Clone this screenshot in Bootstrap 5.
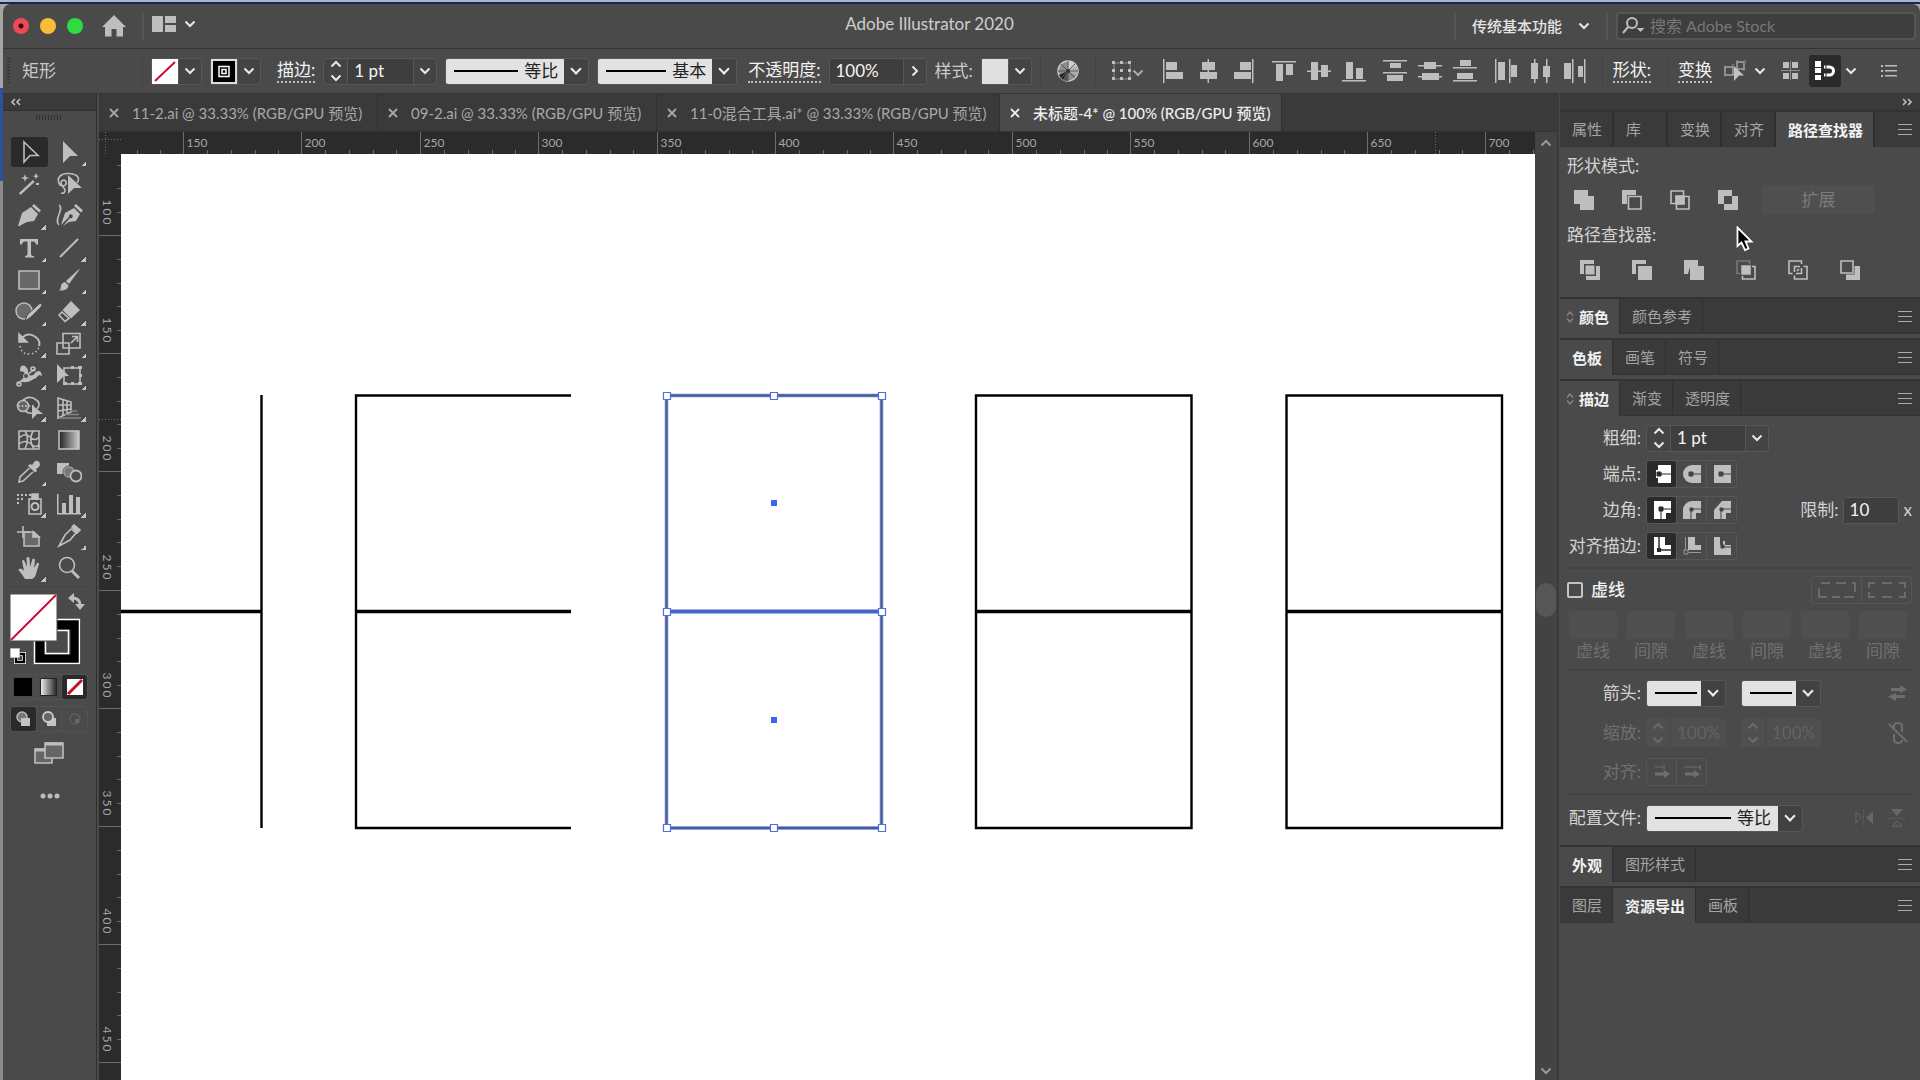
<!DOCTYPE html>
<html lang="zh-CN" data-bs-theme="dark">
<head>
<meta charset="utf-8">
<meta name="viewport" content="width=device-width, initial-scale=1">
<title>Adobe Illustrator 2020</title>
<link href="https://cdn.jsdelivr.net/npm/bootstrap@5.3.0/dist/css/bootstrap.min.css" rel="stylesheet">
<style>
:root{--face:#4a4a4a;--deep:#3a3a3a;--edge:#303030;--rim:#575757;--well:#3e3e3e;--ink:#d2d2d2;--icon:#bebebe;--dim:#707070}
*{box-sizing:border-box}
body{font-family:Lato,"Noto Sans CJK SC",sans-serif;font-size:17px;line-height:24px;color:var(--ink);background:#8b8b8b;height:100vh;overflow:hidden}
button,input,select{font:inherit;color:inherit;background:none;border:0;padding:0;margin:0;border-radius:0}
button{display:flex;align-items:center;justify-content:center}
svg{display:block;flex:none}
a{color:inherit;text-decoration:none}
.desk{height:100vh;padding:4px 0 0 3px;background:linear-gradient(#a9b4d6 0 2px,#1d2540 2px 4px,transparent 4px),linear-gradient(#a5a5a5 0 88px,#2e4f9c 88px 181px,#8b8b8b 181px)}
.app-win{background:var(--face);border-radius:8px 8px 0 0;height:100%;overflow:hidden}
.ic{fill:var(--icon);stroke:none}
.ln{fill:none;stroke:var(--icon);stroke-width:1.6}
.chev{width:12px;height:12px;fill:none;stroke:#e8e8e8;stroke-width:2}
.vsep{width:2px;height:28px;background:#555}
.vsep.low{background:#424242;width:1px;height:30px}
/* title bar */
.titlebar{height:45px;border-bottom:1px solid #343434;position:relative}
.bar-l{flex:1 1 0}
.bar-r{flex:1 1 64px}
.lamp{width:16px;height:16px;border-radius:50%;margin-right:11px}
.lamp-r{background:radial-gradient(#3a0a0e 0 2px,#ee4a54 3px);margin-left:10px}
.lamp-y{background:#f8bd33}.lamp-g{background:#2fdc40}
.win-name{font-size:17px;line-height:24px;padding-bottom:4px;color:#cfcfcf}
.ws{font-size:15px;color:#e4e4e4;font-weight:500}
.search{width:300px;height:28px;border:2px solid #555;border-radius:4px;background:var(--well)}
.search input{flex:1;min-width:0;outline:0;font-size:16px}
.search input::placeholder{color:#777;opacity:1}
/* control bar */
.ctrlbar{height:45px;border-bottom:1px solid #343434;color:#f0f0f0}
.grip{width:3px;height:26px;margin-left:4px;background:repeating-linear-gradient(#2f2f2f 0 1px,transparent 1px 3px)}
.und{border-bottom:2px dotted #bbb;line-height:22px;color:#f2f2f2;white-space:nowrap}
.boxed{height:27px;display:flex;border:1px solid var(--rim);border-radius:3px;background:#444}
.boxed>*+*{border-left:1px solid var(--rim)}
.boxed input{background:var(--well);padding-left:6px;color:#f5f5f5;font-size:17px;min-width:0;outline:0}
.boxed button{width:23px}
.sw{width:26px;flex:none}
.sw svg{width:26px;height:25px}
.dd{position:relative;height:27px}
.dd::after{content:"";position:absolute;right:9px;top:7px;width:8px;height:8px;border:solid #f0f0f0;border-width:0 2px 2px 0;transform:rotate(45deg);pointer-events:none}
.dd select{appearance:none;width:100%;height:27px;border:1px solid var(--rim);border-radius:3px;color:#222;outline:0;line-height:24px;
background:linear-gradient(#000,#000) 8px 50%/var(--len) 2px no-repeat,linear-gradient(90deg,#e2e2e2 calc(100% - 24px),#424242 0);padding-left:calc(var(--len) + 14px)}
.dd option{color:#eee}
.dd-a{width:144px;--len:64px}.dd-b{width:140px;--len:60px}.dd-c{width:80px;--len:42px}.dd-d{width:157px;--len:76px}
.cell{width:35px;height:32px}
.on{background:#2a2a2a;border-radius:3px}
/* tools */
.tools{width:94px;border-right:1px solid var(--edge)}
.mini-head{height:17px;background:var(--deep);border-bottom:1px solid var(--edge)}
.tgrip{width:26px;height:5px;margin:4px 0 16px 33px;background:repeating-linear-gradient(90deg,#2f2f2f 0 1px,transparent 1px 3px)}
.tgrid{display:grid;grid-template-columns:40px 40px;grid-auto-rows:32px;padding-left:6px}
.tgrid button{position:relative}
.tgrid button.on{width:37px;height:30px;margin:1px 1px 1px 2px}
.more::after{content:"";position:absolute;right:3px;bottom:2px;width:5px;height:5px;background:linear-gradient(135deg,transparent 50%,#c4c4c4 50%)}
.trio{width:78px;height:26px;margin-left:7px;border:1px solid #525252;border-radius:3px}
.trio button{flex:1;height:24px}
.trio button+button{border-left:1px solid #525252}
/* document */
.doc{min-width:0;margin-left:2px;background:var(--deep)}
.doctabs{height:38px;border-bottom:1px solid #333;font-size:15px;color:#a8a8a8}
.dtab{padding-left:10px;border-right:1px solid #303030;white-space:nowrap}
.dtab.cur{background:var(--face);color:#eee;font-weight:500}
.dtab svg{margin-right:13px}
.dt1{width:279px}.dt2{width:279px}.dt3{width:343px}.dt4{width:282px}
.rul{background:#2b2b2b}
.rul path{stroke:#6d6d6d;fill:none}
.rul text{font-size:12px;fill:#a6a6a6}
.hr-h{height:22px}.hr-v{width:22px}
.art{background:#fff}
.sbar{width:22px;background:#434343}
.thumb{width:20px;height:34px;border-radius:10px;background:#575757;margin:auto}
.side{width:363px;border-left:2px solid var(--deep);padding-left:1px}
.ptabs{height:36px;background:var(--deep);border-top:1px solid #333;border-bottom:1px solid #333;font-size:15px;color:#a4a4a4}
.ptab{padding:0 10px 0 12px;border-right:1px solid #2f2f2f}
.ptab.cur{background:var(--face);color:#f2f2f2;font-weight:700;margin-bottom:-1px}
.ptab.wide{padding-right:25px}
.ptabs.first .ptab{border-right-width:2px}
.ptab.tw{padding-left:5px}
.burger{width:14px;height:14px;margin:auto 8px auto auto;background:repeating-linear-gradient(#aaa 0 1px,transparent 1px 5px) 0 2px no-repeat}
.pgap{height:6px;border-bottom:1px solid #333}
.pgap.slim{height:5px}
.pbody{padding:0 8px 0 7px}
.prow{height:36px;display:flex;align-items:center}
.plab{width:74px;text-align:right;white-space:nowrap;margin-right:5px;flex:none}
.seg{display:flex;border:1px solid #565656;border-radius:3px;height:28px}
.seg button{width:29px;height:26px}
.seg button+button{border-left:1px solid #565656;width:30px}
.rule{height:2px;background:#444}
.dimt{color:var(--dim)}
.pf{display:flex;gap:28px}
.expand{width:113px;height:29px;background:#4f4f4f;border-radius:3px;color:#7b7b7b;margin-left:24px}
.tick{appearance:none;width:16px;height:16px;border:2px solid #c4c4c4;border-radius:2px}
.gaps{display:grid;grid-template-columns:repeat(6,48px);column-gap:10px;padding:1px 0 0 2px}
.gaps label{display:flex;flex-direction:column;text-align:center;color:var(--dim);line-height:24px}
.gaps input{width:48px;height:28px;background:#4f4f4f}
.ghost{height:28px;display:flex;background:#4f4f4f;width:80px;color:#626262}
.ghost input{width:56px;padding-left:6px;border-left:1px solid #484848}
.ghost button{width:24px}
.ghost .chev{stroke:#6b6b6b}
.pointer{position:absolute;left:1736px;top:226px;z-index:5}
</style>
<script src="https://cdn.jsdelivr.net/npm/bootstrap@5.3.0/dist/js/bootstrap.bundle.min.js"></script>
</head>
<body>
<svg width="0" height="0" class="position-absolute">
<defs>
<symbol id="dn" viewBox="0 0 12 12"><path d="M1.5 3.5 6 8 10.5 3.5"/></symbol>
<symbol id="ud" viewBox="0 0 12 22"><path d="M1.5 6.5 6 2 10.5 6.5M1.5 15.500 6 20 10.500 15.500"/></symbol>
<symbol id="x" viewBox="0 0 10 10"><path d="M1 1 9 9M9 1 1 9" fill="none" stroke="currentColor" stroke-width="1.800"/></symbol>
<linearGradient id="g1"><stop offset="0" stop-color="#222"/><stop offset="1" stop-color="#ccc"/></linearGradient>
<linearGradient id="g2"><stop offset="0" stop-color="#eee"/><stop offset="1" stop-color="#2a2224"/></linearGradient>
</defs></svg>

<div class="desk"><div class="app-win d-flex flex-column">
<header class="titlebar d-flex align-items-center">
  <div class="bar-l d-flex align-items-center">
    <span class="lamp lamp-r"></span><span class="lamp lamp-y"></span><span class="lamp lamp-g"></span>
    <button class="ms-2" aria-label="主页"><svg class="ic" width="24" height="22" viewBox="0 0 24 22"><path d="M12 0 24 12H21V21.500H14.500V14H9.500V21.500H3V12H0Z"/></svg></button>
    <span class="vsep ms-3"></span>
    <button class="ms-2" aria-label="排列文档"><svg class="ic mb-1" width="24" height="16"><path d="M0 0H11V16H0ZM13 0H24V7H13ZM13 9H24V16H13Z"/></svg><svg class="chev ms-2 mb-1"><use href="#dn"/></svg></button>
  </div>
  <div class="win-name">Adobe Illustrator 2020</div>
  <div class="bar-r d-flex align-items-center justify-content-end">
    <span class="vsep me-3"></span>
    <button class="ws">传统基本功能<svg class="chev ms-3"><use href="#dn"/></svg></button>
    <span class="vsep ms-3 me-2"></span>
    <div class="search d-flex align-items-center ps-1 me-1"><svg class="ln me-1" width="24" height="18" viewBox="0 0 24 18" style="stroke-width:2"><circle cx="10" cy="6" r="5"/><path d="M6.500 9.500 1 16"/><path d="M14.500 11h8l-4 4z" fill="#bebebe" stroke="none"/></svg><input type="search" placeholder="搜索 Adobe Stock" aria-label="搜索 Adobe Stock"></div>
  </div>
</header>

<div class="ctrlbar d-flex align-items-center">
  <span class="grip"></span><span style="color:#c8c8c8" class="ms-2 ps-1">矩形</span>
  <span class="vsep low" style="margin-left:86px"></span>
  <div class="boxed ms-2"><span class="sw"><svg><path fill="#fff" d="M0 0H26V25H0Z"/><path d="M3 22 23 3" stroke="#c8102e" stroke-width="2"/></svg></span><button aria-label="填色"><svg class="chev"><use href="#dn"/></svg></button></div>
  <div class="boxed ms-2"><span class="sw"><svg><path fill="#000" stroke="#ddd" stroke-width="2" d="M1 1H25V24H1Z"/><path d="M8 7.500h10v10h-10zM11 10.500h4v4h-4z" fill="none" stroke="#fff" stroke-width="1.500"/></svg></span><button aria-label="描边颜色"><svg class="chev"><use href="#dn"/></svg></button></div>
  <label for="sw1" class="und ms-3">描边:</label>
  <div class="boxed ms-2"><button aria-label="增减"><svg class="chev" style="height:22px"><use href="#ud"/></svg></button><input id="sw1" value="1 pt" style="width:66px"><button aria-label="粗细列表"><svg class="chev"><use href="#dn"/></svg></button></div>
  <div class="dd dd-a ms-2"><select aria-label="变量宽度配置文件"><option>等比</option></select></div>
  <div class="dd dd-b ms-2"><select aria-label="画笔定义"><option>基本</option></select></div>
  <label for="op" class="und" style="margin-left:11px">不透明度:</label>
  <div class="boxed ms-2"><input id="op" value="100%" style="width:73px"><button aria-label="不透明度滑块"><svg class="chev" style="transform:rotate(-90deg)"><use href="#dn"/></svg></button></div>
  <span class="ms-2" style="color:#ccc">样式:</span>
  <div class="boxed ms-2"><span class="sw"><svg><path fill="#e0e0e0" d="M0 0H26V25H0Z"/></svg></span><button aria-label="图形样式"><svg class="chev"><use href="#dn"/></svg></button></div>
  <span class="vsep low ms-2"></span>
  <button class="ms-3" aria-label="重新着色图稿"><svg width="22" height="22" viewBox="0 0 22 22"><circle cx="11" cy="11" r="10" fill="#8d8d8d" stroke="#c8c8c8" stroke-width="1.500"/><path d="M11 11V1a10 10 0 0 1 9 5Z" fill="#ccc"/><path d="M11 11 20 6a10 10 0 0 1 0 10Z" fill="#b0b0b0"/><path d="M11 11 6 20a10 10 0 0 1-4-5Z" fill="#222"/><path d="M11 11V21a10 10 0 0 1-5-1Z" fill="#555"/><path d="M11 1V21M1 11H21M4 4 18 18M18 4 4 18" stroke="#5a5a5a" stroke-width="1"/><circle cx="11" cy="11" r="2" fill="#333"/></svg></button>
  <span class="vsep low ms-3"></span>
  <button class="ms-3" aria-label="对齐到画板"><svg width="20" height="20" class="ic"><path d="M2 2H18V18H2Z" fill="none" stroke="#8a8a8a"/><path d="M0 0h3v3H0zM8 0h3v3H8zM16 0h3v3H16zM0 8h3v3H0zM8 8h3v3H8zM16 8h3v3H16zM0 16h3v3H0zM8 16h3v3H8zM16 16h3v3H16z"/></svg><svg class="chev" style="stroke:#aaa;margin-top:4px"><use href="#dn"/></svg></button>
  <div class="d-flex ms-2 ps-1">
   <button class="cell" aria-label="水平左对齐"><svg class="ic" width="24" height="24"><path d="M2 0h1.500v24H2zM5 3h11v8H5zM5 13h17v7H5z"/></svg></button>
   <button class="cell" aria-label="水平居中对齐"><svg class="ic" width="24" height="24"><path d="M11.500 0h1.500v24h-1.500zM6 3h13v8H6zM4 13h17v7H4z"/></svg></button>
   <button class="cell" aria-label="水平右对齐"><svg class="ic" width="24" height="24"><path d="M21 0h1.500v24H21zM9 3h11v8H9zM3 13h17v7H3z"/></svg></button>
   <span style="width:6px"></span>
   <button class="cell" aria-label="垂直顶对齐"><svg class="ic" width="24" height="24"><path d="M0 2h24v1.500H0zM4 5h7v17H4zM14 5h7v11h-7z"/></svg></button>
   <button class="cell" aria-label="垂直居中对齐"><svg class="ic" width="24" height="24"><path d="M0 11.500h24v1.500H0zM4 3h7v18H4zM14 6h7v12h-7z"/></svg></button>
   <button class="cell" aria-label="垂直底对齐"><svg class="ic" width="24" height="24"><path d="M0 21h24v1.500H0zM4 3h7v17H4zM14 9h7v11h-7z"/></svg></button>
   <span style="width:6px"></span>
   <button class="cell" aria-label="垂直顶分布"><svg class="ic" width="24" height="24"><path d="M0 1h24v1.500H0zM7 4h11v5H7zM0 13h24v1.500H0zM4 16h16v6H4z"/></svg></button>
   <button class="cell" aria-label="垂直居中分布"><svg class="ic" width="24" height="24"><path d="M0 6h24v1.500H0zM6 3h12v7H6zM0 17h24v1.500H0zM4 14h17v7H4z"/></svg></button>
   <button class="cell" aria-label="垂直底分布"><svg class="ic" width="24" height="24"><path d="M0 8h24v1.500H0zM7 1h11v6H7zM0 21h24v1.500H0zM4 14h16v6H4z"/></svg></button>
   <span style="width:6px"></span>
   <button class="cell" aria-label="水平左分布"><svg class="ic" width="24" height="24"><path d="M1 0h1.500v24H1zM4 3h7v18H4zM15 0h1.500v24H15zM17 6h6v12h-6z"/></svg></button>
   <button class="cell" aria-label="水平居中分布"><svg class="ic" width="24" height="24"><path d="M5 0h1.500v24H5zM2 4h7v16H2zM17 0h1.500v24H17zM14 7h7v11h-7z"/></svg></button>
   <button class="cell" aria-label="水平右分布"><svg class="ic" width="24" height="24"><path d="M0 4h7v16H0zM8 0h1.500v24H8zM14 7h5v11h-5zM20 0h1.500v24H20z"/></svg></button>
  </div>
  <span class="vsep low ms-2"></span>
  <a href="#" class="und" style="margin-left:10px">形状:</a>
  <span class="vsep low ms-3"></span>
  <a href="#" class="und" style="margin-left:10px">变换</a>
  <button style="margin-left:12px" aria-label="隔离选中的对象"><svg width="22" height="22"><path d="M1 7h8v8H1zM13 2h7v7h-7z" fill="none" stroke="#a5a5a5" stroke-width="1.500"/><path d="M10 6 20 15.500H15L10 21Z" fill="#c2c2c2"/><path d="M0 5v3M0 14v3M9 6V4M12 1h2M19 0h2v3M20 8v3" stroke="#999"/></svg><svg class="chev ms-2"><use href="#dn"/></svg></button>
  <button style="margin-left:15px" aria-label="对齐像素"><svg width="20" height="20" class="ic"><path d="M2 1h6v6H2zM11 1h6v6h-6zM2 12h6v6H2zM11 12h6v6h-6z"/><path d="M9.500 0V19M0 9.500H19" stroke="#8a8a8a"/></svg></button>
  <button class="on ms-2" style="width:32px;height:32px" aria-label="对齐字形"><svg width="22" height="20"><path d="M1 0h6v6H1zM1 7h6v5H1zM1 14h6v5H1z" fill="#fff"/><path d="M10 6h5.500a4 4 0 0 1 0 8H10" fill="none" stroke="#fff" stroke-width="3"/><path d="M12 4v4M12 12v4" stroke="#2a2a2a"/></svg></button>
  <button class="ms-1" aria-label="更多"><svg class="chev"><use href="#dn"/></svg></button>
  <button style="margin-left:24px" aria-label="控制面板菜单"><svg width="16" height="12" class="ic"><path d="M0 0h2v2H0zM4 0h12v1.500H4zM0 5h2v2H0zM4 5h12v1.500H4zM0 10h2v2H0zM4 10h12v1.500H4z"/></svg></button>
</div>

<div class="d-flex flex-fill" style="min-height:0">
<aside class="tools flex-shrink-0">
  <div class="mini-head d-flex align-items-center ps-2"><svg width="10" height="8" class="ln"><path d="M4 1 1 4 4 7M9 1 6 4 9 7"/></svg></div>
  <div class="tgrip"></div>
  <div class="tgrid">
   <button class="on" aria-label="选择工具"><svg width="24" height="24" class="ln"><path d="M6 2 20 15.500H12L6 22Z"/></svg></button>
   <button class="more" aria-label="直接选择工具"><svg width="24" height="24" class="ic"><path d="M6 1 21 16H13L6 23Z"/></svg></button>
   <button aria-label="魔棒工具"><svg width="24" height="24" class="ic"><path d="M2 21 16 8 17.500 10 3.500 23Z"/><path d="M8 2 9 5 12 6 9 7 8 10 7 7 4 6 7 5ZM19 1 20 3.500 22 4 20 5 19 7 18 5 16 4 18 3.500ZM19 11h3v2h-3z"/></svg></button>
   <button aria-label="套索工具"><svg width="26" height="24" class="ln"><path d="M4 13C-1 5 6 1 13 1.500S25 5 21 11M4 13c4 2 7 0 6-3s-5-2-5 1 4 5 4 7-1 4-4 3"/><path class="ic" style="stroke:none" d="M12 3 26 16H18L12 22Z"/></svg></button>
   <button class="more" aria-label="钢笔工具"><svg width="24" height="24" class="ic"><path d="M14 3 21 10 17 17 10 18 2 22 1.500 21 10 13A2 2 0 1 1 11.500 14.500L3 22 1 22 5 9Z"/><path d="M15 2 17 0 24 6.500 22 8.500Z"/></svg></button>
   <button aria-label="曲率工具"><svg width="27" height="24" class="ic"><path d="M3 1C9 4-3 16 3 21" class="ln"/><path d="M18 4 24 10 20 17 13 18 7 22 14 14A2 2 0 1 0 13 13L5 21 9 9Z"/><path d="M18 2 20 0 27 6.500 25 8.500Z"/></svg></button>
   <button class="more" aria-label="文字工具"><svg width="24" height="24" class="ic"><path d="M3 3H21V8.500H19Q18.500 5.500 16 5.500H14V18Q14 20 17 20V21.500H8V20Q10.500 20 10.500 18V5.500H8Q5.500 5.500 5 8.500H3Z"/></svg></button>
   <button class="more" aria-label="直线段工具"><svg width="24" height="24" class="ln"><path d="M3 21 21 3" stroke-width="2"/></svg></button>
   <button class="more" aria-label="矩形工具"><svg width="24" height="24" class="ln"><path d="M2 3H22V21H2Z" fill="#686868"/></svg></button>
   <button class="more" aria-label="画笔工具"><svg width="24" height="24" class="ic"><path d="M23 1 12 16 9 13 21 2ZM8 14 11.500 17.500Q11 23 2 22.500 4 21 4 18T8 14Z"/></svg></button>
   <button class="more" aria-label="斑点画笔工具"><svg width="28" height="24" class="ic"><circle cx="9" cy="11" r="8" fill="#6a6a6a" stroke="#bebebe" stroke-width="1.500"/><path d="M26 3Q28 5 26 7L16 17 10 21 12 15 24 4Z" stroke="#4a4a4a" stroke-width="1"/></svg></button>
   <button class="more" aria-label="橡皮擦工具"><svg width="24" height="24" class="ic"><path d="M14 1 23 10 14 18.500 5.500 10Z"/><path d="M5 12 2 15 8 21.500 12 18.500Z" class="ln"/></svg></button>
   <button class="more" aria-label="旋转工具"><svg width="24" height="24" class="ln"><path d="M4 7Q10 0 17 4T22 14" stroke-width="2"/><path d="M2 2V10H10Z" fill="#bebebe"/><path d="M3 14Q5 23 13 22T22 14" stroke-dasharray="1.500 2.500"/></svg></button>
   <button class="more" aria-label="比例缩放工具"><svg width="26" height="24" class="ln"><path d="M7 1.500H24V16H7ZM1 11H13V22H1ZM15 11 21 5M16 4.500H21.500V10"/></svg></button>
   <button class="more" aria-label="宽度工具"><svg width="26" height="24" class="ic"><path d="M4 7Q4 0 9 2 13 5 12 10 16 14 20 8 25 5 26 12L23 11Q20 15 16 16 10 20 4 17 12 14 8 8Z"/><path d="M2 20 18 5" class="ln"/><circle cx="3" cy="20" r="2" class="ln"/><circle cx="17" cy="5" r="2" class="ln"/><circle cx="10" cy="12" r="2.500" fill="#4a4a4a" stroke="#bebebe"/></svg></button>
   <button class="more" aria-label="自由变换工具"><svg width="26" height="24" class="ln"><path d="M8 4H24V20H8Z"/><path fill="#bebebe" stroke="none" d="M1 0 13 12H8L1 19ZM22 2h4v3h-4zM22 18h4v3h-4zM7 18h4v3H7zM15 2h3v3h-3zM15 18h3v3h-3zM23 10h3v3h-3z"/></svg></button>
   <button class="more" aria-label="形状生成器工具"><svg width="27" height="24" class="ln"><circle cx="7" cy="10" r="5.500" fill="#656565"/><path d="M6 5Q12-1 19 3T21 13M9 15Q13 18 17 17"/><path d="M2 10H18" stroke-dasharray="2 1.500"/><path class="ic" style="stroke:none" d="M16 9 27 18H21L16 23Z"/></svg></button>
   <button class="more" aria-label="透视网格工具"><svg width="26" height="24" class="ln"><path d="M2 2 15 6V16L2 22ZM7 3.500V19M11 5V18M2 9 15 9M2 15 15 13"/><path d="M14 15H21M9 18.500H23M3 22H25" stroke="#858585"/></svg></button>
   <button aria-label="网格工具"><svg width="24" height="24" class="ln"><path d="M2 3H22V21H2ZM2 10Q8 4 13 9T22 9M2 16Q8 11 14 16T22 16M8 3Q13 10 8 21M16 3Q11 12 17 21"/></svg></button>
   <button aria-label="渐变工具"><svg width="24" height="24"><path d="M2 3H22V21H2Z" fill="url(#g1)" stroke="#c8c8c8" stroke-width="1.500"/></svg></button>
   <button class="more" aria-label="吸管工具"><svg width="24" height="24" class="ic"><path d="M18 1Q22 0 23 4 23 7 19 9L20 11 18 12.500 11 6 13 4 15 5Z"/><path d="M12.500 8 3 17 2 22 6 21 16 12" class="ln"/></svg></button>
   <button aria-label="混合工具"><svg width="26" height="24" class="ic"><path d="M1 3H13V10L7 14H1Z"/><circle cx="13" cy="12" r="6" fill="#777" stroke="#4a4a4a"/><circle cx="13" cy="12" r="5" class="ln" style="stroke:#999"/><circle cx="20" cy="16" r="5.500" fill="#4a4a4a" stroke="#bebebe" stroke-width="1.800"/></svg></button>
   <button class="more" aria-label="符号喷枪工具"><svg width="26" height="24" class="ln"><path d="M13 7H25V22H13Z"/><circle cx="19" cy="14.500" r="3.500" stroke-width="2"/><path d="M16 2h6v5h-6z" fill="#bebebe"/><path d="M1 3H15M1 7H8M1 11H5" stroke-width="2" stroke-dasharray="2 2"/></svg></button>
   <button class="more" aria-label="柱形图工具"><svg width="26" height="24" class="ic"><path d="M1 2h1.500v19H25v1.500H1zM6 11h4v10H6zM13 3h4v18h-4zM20 5h4v16h-4z"/></svg></button>
   <button aria-label="画板工具"><svg width="26" height="24" class="ln"><path d="M8 8H18L23 13V22H8Z" fill="#686868"/><path d="M1 8H14M7 2V14"/><path d="M17 8V13H23Z" fill="#bebebe"/></svg></button>
   <button class="more" aria-label="切片工具"><svg width="24" height="24" class="ln"><path d="M2 22 8 11 14 5 19 9 13 16Z"/><path d="M15 3 17 1 23 6 20 9Z" fill="#bebebe"/></svg></button>
   <button class="more" aria-label="抓手工具"><svg width="24" height="24" class="ic"><path d="M8 23Q5 18 1.500 14 2 11.500 5 13L7 15 5 5Q6 3 7.500 5L10 11 9.500 2Q11 0 12.500 2L13 11 15.500 3Q17 1.500 18 4L17 12 20 7Q22 6 22 8L19 18Q18 22 15 23Z"/></svg></button>
   <button aria-label="缩放工具"><svg width="24" height="24" class="ln"><circle cx="10" cy="9" r="7.500"/><path d="M15 15 22 22" stroke-width="3"/></svg></button>
  </div>
  <div class="d-flex flex-column">
   <svg width="94" height="90" role="img" aria-label="填色和描边"><path d="M5 3H86" stroke="#444"/><path d="M36.500 40.500h36v35h-36z" fill="none" stroke="#000" stroke-width="10"/><path d="M31.500 35.500h45v44h-45zM42.500 46.500h23v23h-23z" fill="none" stroke="#fff" stroke-width="1.500"/><path d="M7 10h47v47H7z" fill="#fff" stroke="#4a4a4a"/><path d="M8 56 53 11" stroke="#c8102e" stroke-width="2"/><path d="M69 14Q77 14 77 21" fill="none" stroke="#bebebe" stroke-width="3"/><path d="M65 14 71 9V19ZM72 20H82L77 26Z" fill="#bebebe"/><path d="M13 70h8v8h-8z" fill="none" stroke="#fff" stroke-width="4"/><path d="M13 70h8v8h-8z" fill="none" stroke="#000" stroke-width="2.500"/><path d="M7.500 64.500h9v9h-9z" fill="#fff" stroke="#bbb"/></svg>
   <div class="trio d-flex flex-shrink-0"><button aria-label="颜色"><svg width="18" height="18"><path d="M0 0h18v18H0z" fill="#000"/></svg></button><button aria-label="渐变"><svg width="18" height="18"><path d="M.500.500h16v17h-16z" fill="url(#g2)" stroke="#222"/></svg></button><button class="on" aria-label="无"><svg width="18" height="18"><path d="M1 1h16v16H1z" fill="#fff"/><path d="M2 16 16 2" stroke="#c8102e" stroke-width="3"/></svg></button></div>
   <div class="trio d-flex flex-shrink-0" style="margin-top:6px"><button class="on" aria-label="正常绘图"><svg width="16" height="16"><circle cx="7" cy="6" r="5" fill="#777" stroke="#bbb" stroke-width="1.500"/><path d="M6 7h9v8H6z" fill="#c4c4c4"/></svg></button><button aria-label="背面绘图"><svg width="16" height="16"><path d="M6 7h9v8H6z" fill="#c4c4c4"/><circle cx="7" cy="6" r="5" fill="#666" stroke="#ccc" stroke-width="1.800"/></svg></button><button aria-label="内部绘图"><svg width="16" height="16"><circle cx="8" cy="8" r="5" fill="none" stroke="#5e5e5e" stroke-width="1.500"/><path d="M8 8h5a5 5 0 0 1-5 5z" fill="#666"/></svg></button></div>
   <button style="margin:9px 2px 0 0" aria-label="更改屏幕模式"><svg width="30" height="24" class="ln"><path d="M1 8H18V22H1Z" fill="#666"/><path d="M1 9H18" stroke-width="3"/><path d="M11 2H29V17H11Z" fill="#666"/><path d="M11 3H29" stroke-width="3"/></svg></button>
  </div>
  <button class="mx-auto" style="margin-top:27px" aria-label="编辑工具栏"><svg width="20" height="8" class="ic"><circle cx="3" cy="4" r="2.500"/><circle cx="10" cy="4" r="2.500"/><circle cx="17" cy="4" r="2.500"/></svg></button>
</aside>

<main class="doc d-flex flex-column flex-fill">
  <nav class="doctabs d-flex flex-shrink-0">
   <a href="#" class="dtab dt1 d-flex align-items-center"><svg width="10" height="10"><use href="#x"/></svg>11-2.ai @ 33.33% (RGB/GPU 预览)</a>
   <a href="#" class="dtab dt2 d-flex align-items-center"><svg width="10" height="10"><use href="#x"/></svg>09-2.ai @ 33.33% (RGB/GPU 预览)</a>
   <a href="#" class="dtab dt3 d-flex align-items-center"><svg width="10" height="10"><use href="#x"/></svg>11-0混合工具.ai* @ 33.33% (RGB/GPU 预览)</a>
   <a href="#" class="dtab dt4 cur d-flex align-items-center"><svg width="10" height="10"><use href="#x"/></svg>未标题-4* @ 100% (RGB/GPU 预览)</a>
  </nav>
  <div class="d-flex flex-fill" style="min-height:0">
   <div class="d-flex flex-column flex-fill" style="min-width:0">
    <div class="d-flex hr-h flex-shrink-0"><svg class="rul" width="22" height="22"><path d="M0 7.500H22M6.500 0V22" stroke-dasharray="1 2"/></svg><svg class="rul flex-fill" id="rulH" height="22" style="width:0"></svg></div>
    <div class="d-flex flex-fill" style="min-height:0">
     <svg class="rul hr-v" id="rulV" height="100%"></svg>
     <svg class="art flex-fill" style="width:0" height="100%" role="img" aria-label="画稿">
      <g fill="none" stroke="#000" stroke-width="2.400">
       <path d="M140.500 241V674"/><path d="M0 457.500H141" stroke-width="3.500"/>
       <path d="M450 241.500H235V674H450"/><path d="M235 457.500H450" stroke-width="3.500"/>
       <path d="M855 241.500H1070.500V674H855Z"/><path d="M855 457.500H1070" stroke-width="3.500"/>
       <path d="M1165.500 241.500H1381V674H1165.500Z"/><path d="M1165.500 457.500H1381" stroke-width="3.500"/>
      </g>
      <g fill="none"><path d="M545.500 241.500H760.500V674H545.500Z" stroke="#a9bbf5" stroke-width="4"/><path d="M545.500 241.500H760.500V674H545.500Z" stroke="#4a5b94" stroke-width="2.400"/><path d="M545.500 457.500H760.500" stroke="#4562c8" stroke-width="4"/></g>
      <g fill="#fff" stroke="#4f6fe0" stroke-width="1.200"><path d="M542.500 238.500h7v7h-7zM649.500 238.500h7v7h-7zM757.500 238.500h7v7h-7zM542.500 454.500h7v7h-7zM757.500 454.500h7v7h-7zM542.500 670.500h7v7h-7zM649.500 670.500h7v7h-7zM757.500 670.500h7v7h-7z"/></g>
      <path d="M650 346h6v6h-6zM650 563h6v6h-6z" fill="#3d66ee"/>
     </svg>
    </div>
   </div>
   <div class="sbar d-flex flex-column align-items-center flex-shrink-0">
    <button style="height:22px" aria-label="向上滚动"><svg class="chev" style="stroke:#999;transform:rotate(180deg)"><use href="#dn"/></svg></button>
    <span style="flex:429"></span><span class="thumb my-0"></span><span style="flex:445"></span>
    <button style="height:18px" aria-label="向下滚动"><svg class="chev" style="stroke:#999"><use href="#dn"/></svg></button>
   </div>
  </div>
</main>

<aside class="side flex-shrink-0">
  <div class="mini-head d-flex align-items-center justify-content-end pe-2"><svg width="10" height="8" class="ln"><path d="M1 1 4 4 1 7M6 1 9 4 6 7"/></svg></div>
  <nav class="ptabs first d-flex"><a href="#" class="ptab d-flex align-items-center">属性</a><a href="#" class="ptab wide d-flex align-items-center">库</a><a href="#" class="ptab d-flex align-items-center">变换</a><a href="#" class="ptab d-flex align-items-center">对齐</a><a href="#" class="ptab cur d-flex align-items-center">路径查找器</a><button class="burger" aria-label="面板菜单"></button></nav>
  <section class="pbody" style="height:146px">
   <div style="height:38px;padding-top:7px">形状模式:</div>
   <div class="d-flex align-items-center" style="height:29px;padding-left:7px">
    <div class="pf">
    <button aria-label="联集"><svg width="20" height="20" class="ic"><path d="M0 0h14v6h6v14H6v-6H0z"/></svg></button>
    <button aria-label="减去顶层"><svg width="20" height="20" class="ic"><path d="M0 0h14v5H5v9H0z"/><path d="M6.500 6.500h12.500v12.500H6.500z" class="ln"/></svg></button>
    <button aria-label="交集"><svg width="20" height="20" class="ln"><path d="M1 1h12.500v12.500H1zM6.500 6.500h12.500v12.500H6.500z"/><path d="M6 6h8v8H6z" fill="#bebebe"/></svg></button>
    <button aria-label="差集"><svg width="20" height="20" class="ic"><path fill-rule="evenodd" d="M0 0h14v6h6v14H6v-6H0zM6 6v8h8V6z"/></svg></button>
    </div>
    <button class="expand" disabled>扩展</button>
   </div>
   <div style="height:46px;padding-top:9px">路径查找器:</div>
   <div class="pf" style="gap:32px;padding-left:13px">
    <button aria-label="分割"><svg width="20" height="20" class="ic"><path d="M0 0h14v4H4v10H0zM16 6h4v14H6v-4h10zM5.500 5.500h9v9h-9z"/></svg></button>
    <button aria-label="修边"><svg width="20" height="20" class="ic"><path d="M0 0h14v4H4v10H0zM6 6h14v14H6z"/></svg></button>
    <button aria-label="合并"><svg width="20" height="20" class="ic"><path d="M0 0h14v6h6v14H6V7L4 14H0z"/></svg></button>
    <button aria-label="裁剪"><svg width="20" height="20" class="ln"><path d="M4 13.500H1V1h12.500V4" stroke="#777"/><path d="M16 6.500h3v12.500H6.500V16"/><path d="M6 6h8v8H6z" fill="#bebebe"/></svg></button>
    <button aria-label="轮廓"><svg width="20" height="20" class="ln"><path d="M13.500 4V1H1v12.500h3.500M15.500 6.500H19V19H6.500v-3.500M6.500 12V6.500H12M13.500 8v5.500H8M11 9 9 11"/></svg></button>
    <button aria-label="减去后方对象"><svg width="20" height="20" class="ic"><path d="M1 1h12v12H1z" class="ln"/><path d="M14.500 6H20v14H6v-5.500h8.500z"/></svg></button>
   </div>
  </section>
  <div class="pgap slim"></div>
  <nav class="ptabs d-flex"><a href="#" class="ptab tw cur d-flex align-items-center"><svg width="10" height="12" class="me-1" fill="none" stroke="#888" stroke-width="1.300"><path d="M2 4.500 5 1 8 4.500M2 7.500 5 11 8 7.500"/></svg>颜色</a><a href="#" class="ptab d-flex align-items-center">颜色参考</a><button class="burger" aria-label="面板菜单"></button></nav>
  <div class="pgap slim"></div>
  <nav class="ptabs d-flex"><a href="#" class="ptab cur d-flex align-items-center">色板</a><a href="#" class="ptab d-flex align-items-center">画笔</a><a href="#" class="ptab d-flex align-items-center">符号</a><button class="burger" aria-label="面板菜单"></button></nav>
  <div class="pgap slim"></div>
  <nav class="ptabs d-flex"><a href="#" class="ptab tw cur d-flex align-items-center"><svg width="10" height="12" class="me-1" fill="none" stroke="#888" stroke-width="1.300"><path d="M2 4.500 5 1 8 4.500M2 7.500 5 11 8 7.500"/></svg>描边</a><a href="#" class="ptab d-flex align-items-center">渐变</a><a href="#" class="ptab d-flex align-items-center">透明度</a><button class="burger" aria-label="面板菜单"></button></nav>
  <section class="pbody" style="height:425px;padding-top:4px">
   <div class="prow"><label class="plab" for="sw2">粗细:</label><div class="boxed"><button aria-label="增减"><svg class="chev" style="height:22px"><use href="#ud"/></svg></button><input id="sw2" value="1 pt" style="width:75px"><button aria-label="粗细列表"><svg class="chev"><use href="#dn"/></svg></button></div></div>
   <div class="prow"><span class="plab">端点:</span><div class="seg">
     <button class="on" aria-label="平头端点"><svg width="18" height="18"><path d="M5 0h13v18H5V13H3V5h2z" fill="#fff"/><path d="M4 7h4v4H4zM8 9H18" fill="#2a2a2a" stroke="#2a2a2a"/></svg></button>
     <button aria-label="圆头端点"><svg width="18" height="18"><path d="M9 0h9v18H9A9 9 0 0 1 9 0z" fill="#bebebe"/><path d="M6 7h4v4H6zM9 9H18" fill="#444" stroke="#444"/></svg></button>
     <button aria-label="方头端点"><svg width="18" height="18"><path d="M1 0h17v18H1z" fill="#bebebe"/><path d="M6 7h4v4H6zM9 9H18" fill="#444" stroke="#444"/></svg></button></div></div>
   <div class="prow"><span class="plab">边角:</span><div class="seg">
     <button class="on" aria-label="斜接连接"><svg width="18" height="18"><path d="M1 0h17v12h-5v6H1z" fill="#fff"/><path d="M6 6h4v4H6zM8 8H18M8 8V18" fill="#2a2a2a" stroke="#2a2a2a"/></svg></button>
     <button aria-label="圆角连接"><svg width="18" height="18"><path d="M0 18V9A9 9 0 0 1 9 0h9v12h-5v6z" fill="#bebebe"/><path d="M7 7h3v3H7zM8 8H18M8 8V18" fill="#444" stroke="#444"/></svg></button>
     <button aria-label="斜角连接"><svg width="18" height="18"><path d="M1 18V9L9 0h9v12h-5v6z" fill="#bebebe"/><path d="M7 7h3v3H7zM8 8H18M8 8V18" fill="#444" stroke="#444"/></svg></button></div>
     <label for="lim" class="ms-auto me-1">限制:</label><div class="boxed"><input id="lim" value="10" style="width:54px"></div><span style="padding-left:5px">x</span></div>
   <div class="prow"><span class="plab">对齐描边:</span><div class="seg">
     <button class="on" aria-label="使描边居中对齐"><svg width="18" height="18"><path d="M1 0h11v8h6v10H1z" fill="#fff"/><path d="M4 11h4v4H4z" fill="#2a2a2a"/><path d="M6 0V13H18" fill="none" stroke="#2a2a2a" stroke-width="1.500"/></svg></button>
     <button aria-label="使描边内侧对齐"><svg width="18" height="18"><path d="M5 0h7v8h6v5H5z" fill="#bebebe"/><path d="M2.500 0V13M6 15.500H18M1 13h4v4H1z" fill="none" stroke="#999"/></svg></button>
     <button aria-label="使描边外侧对齐"><svg width="18" height="18"><path d="M1 0h6v8h3V4h2v4h6v10H1z" fill="#bebebe"/><path d="M8 8h3v3H8zM10 10H18M8.500 0V9" fill="#444" stroke="#444"/></svg></button></div></div>
   <div class="rule" style="margin-top:3px"></div>
   <div class="d-flex align-items-center" style="height:40px;margin-top:1px"><input type="checkbox" class="tick" id="dash"><label for="dash" class="ms-2" style="color:#f2f2f2;font-weight:500">虚线</label>
    <div class="seg ms-auto"><button style="width:49px" aria-label="保留虚线"><svg width="38" height="16" fill="none" stroke="#6b6b6b" stroke-width="2"><path d="M12 1H3M1 6V15H9M18 1H28M14 15H22M34 1H37V10M26 15H36"/></svg></button><button style="width:50px" aria-label="对齐虚线"><svg width="38" height="16" fill="none" stroke="#6b6b6b" stroke-width="2"><path d="M7 1H1V6M1 10V15H7M14 1H24M14 15H24M31 1H37V6M37 10V15H31"/></svg></button></div></div>
   <div class="gaps">
    <label><input disabled>虚线</label><label><input disabled>间隙</label><label><input disabled>虚线</label><label><input disabled>间隙</label><label><input disabled>虚线</label><label><input disabled>间隙</label></div>
   <div class="rule" style="margin-top:6px"></div>
   <div class="prow" style="height:44px"><span class="plab">箭头:</span><div class="dd dd-c"><select aria-label="起点箭头"><option></option></select></div><div class="dd dd-c" style="margin-left:15px"><select aria-label="终点箭头"><option></option></select></div><button class="ms-auto me-1" aria-label="互换箭头"><svg width="20" height="16" fill="#6e6e6e"><path d="M3 3h9V0l7 4.500L12 8V6H3zM17 10v3H8v3L0 11.500 8 8v2z"/></svg></button></div>
   <div class="prow dimt"><span class="plab">缩放:</span><div class="ghost"><button disabled aria-label="增减"><svg class="chev" style="height:22px"><use href="#ud"/></svg></button><input disabled value="100%" aria-label="起点缩放"></div><div class="ghost" style="margin-left:15px"><button disabled aria-label="增减"><svg class="chev" style="height:22px"><use href="#ud"/></svg></button><input disabled value="100%" aria-label="终点缩放"></div><button class="ms-auto me-1" disabled aria-label="链接缩放"><svg width="20" height="22" fill="none" stroke="#6e6e6e" stroke-width="2"><path d="M1 2 19 20M6 6V4Q6 1 10 1T14 4V10M6 12V17Q6 21 10 21T14 18"/></svg></button></div>
   <div class="prow dimt" style="height:42px"><span class="plab">对齐:</span><div class="seg"><button disabled aria-label="延伸到终点"><svg width="18" height="16" fill="#6e6e6e"><path d="M2 8.500h9V6l6 4-6 4v-2.500H2z"/><path d="M2 3H10M11 0V6" stroke="#6e6e6e"/></svg></button><button disabled aria-label="放在终点"><svg width="18" height="16" fill="#6e6e6e"><path d="M2 8.500h9V6l6 4-6 4v-2.500H2z"/><path d="M1 3H17M17.500 1V6" stroke="#6e6e6e"/></svg></button></div></div>
   <div class="rule"></div>
   <div class="prow" style="height:46px"><span class="plab">配置文件:</span><div class="dd dd-d"><select aria-label="配置文件"><option>等比</option></select></div>
    <button class="ms-auto" aria-label="纵向翻转"><svg width="18" height="16" fill="#666"><path d="M18 1V14L11 7.500Z"/><path d="M1 2V13L6 7.500Z" fill="none" stroke="#666"/><path d="M8.500 0V16" stroke="#666" stroke-dasharray="1.500 1.500"/></svg></button><button style="margin:0 7px 0 16px" aria-label="横向翻转"><svg width="16" height="18" fill="#666"><path d="M2 0H14L8 7Z"/><path d="M3 17H13L8 12Z" fill="none" stroke="#666"/><path d="M0 9.500H16" stroke="#666" stroke-dasharray="1.500 1.500"/></svg></button></div>
  </section>
  <div class="pgap slim"></div>
  <nav class="ptabs d-flex"><a href="#" class="ptab cur d-flex align-items-center">外观</a><a href="#" class="ptab d-flex align-items-center">图形样式</a><button class="burger" aria-label="面板菜单"></button></nav>
  <div class="pgap slim"></div>
  <nav class="ptabs d-flex"><a href="#" class="ptab d-flex align-items-center">图层</a><a href="#" class="ptab cur d-flex align-items-center">资源导出</a><a href="#" class="ptab d-flex align-items-center">画板</a><button class="burger" aria-label="面板菜单"></button></nav>
</aside>
</div>
</div></div>
<svg class="pointer" width="18" height="26" viewBox="0 0 18 26"><path d="M1.500 1.500V20L5.500 16.500 9 24 12.500 22.500 9.500 15.500H15.500Z" fill="#000" stroke="#fff" stroke-width="1.800"/></svg>
<script>
/* rulers: a labelled tick every 50 units, a short tick every 10 */
const unitX = 118.4, unitY = 118.2;
const rulH = document.getElementById('rulH'), rulV = document.getElementById('rulV');
const w = rulH.getBoundingClientRect().width, hgt = rulV.getBoundingClientRect().height;
let h = '', v = '', ht = '', vt = '';
for (let i = -1; 62 + i * unitX < w; i++) {
  const x = Math.round(62 + i * unitX) + .5;
  h += `M${x} 0V22`;
  if (x > 0 && x + 26 < w) ht += `<text x="${x + 3}" y="15">${150 + i * 50}</text>`;
  for (let k = 1; k < 5; k++) h += `M${Math.round(x + k * unitX / 5) + .5} 18V22`;
}
for (let i = -1; 81 + i * unitY < hgt; i++) {
  const y = Math.round(81 + i * unitY) + .5;
  v += `M0 ${y}H22`;
  if (y > 40) String(100 + i * 50).split('').forEach((d, n) => { vt += `<text transform="translate(4 ${y - 36 + n * 9}) rotate(90)">${d}</text>`; });
  for (let k = 1; k < 5; k++) v += `M18 ${Math.round(y + k * unitY / 5) + .5}H22`;
}
rulH.innerHTML = `<path d="${h}"/><path d="M1314.5 0V22" stroke-dasharray="1 2"/>` + ht;
rulV.innerHTML = `<path d="${v}"/><path d="M0 265.5H22" stroke-dasharray="1 2"/>` + vt;
</script>
</body>
</html>
